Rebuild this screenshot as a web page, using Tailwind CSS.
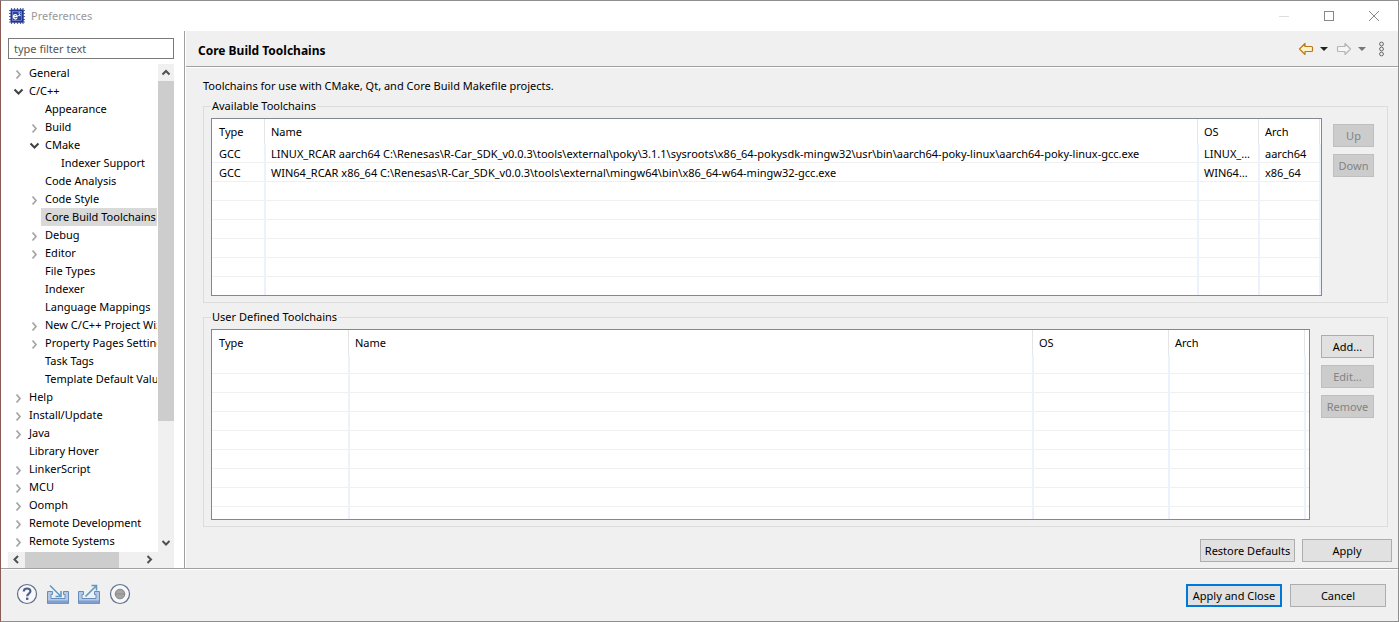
<!DOCTYPE html>
<html lang="en">
<head>
    <meta charset="UTF-8">
    <meta name="viewport" content="width=device-width, initial-scale=1.0">
    <title>Preferences</title>
    <script src="https://cdn.jsdelivr.net/npm/@tailwindcss/browser@4"></script>
</head>
<body class="font-['Noto_Sans','Open_Sans',sans-serif] text-[11px] leading-4 text-black bg-[#f0f0f0]">
    <div class="flex flex-col min-h-screen border border-[#8f8f8f] border-l-[#8a5a54]">

        <!-- Title bar -->
        <header class="flex items-center h-[30px] bg-white pl-2 pr-px">
            <svg class="w-4 h-4" viewBox="0 0 16 16">
                <path d="M2.500 0v16M5.500 0v16M8.500 0v16M11.500 0v16M14 0v16M0 2.500h16M0 5.500h16M0 8.500h16M0 11.500h16M0 14h16" stroke="#5567ae" stroke-width="1.200"/>
                <rect x="1.500" y="1.500" width="13" height="13" rx="1" fill="#24378f"/>
                <rect x="3.500" y="3.500" width="9" height="9" fill="#2d429c" stroke="#8392d4" stroke-width=".7"/>
                <path d="M4.500 8.600h3.600c0-2.600-3.600-2.600-3.600.2 0 2.600 2.600 2.600 3.500 1.400" fill="none" stroke="#fff" stroke-width="1.300"/>
                <path d="M9.300 5.200c.8-1.200 2.400-.3 1.600.8L9.400 7.600h2.300" fill="none" stroke="#fff" stroke-width=".9"/>
            </svg>
            <h1 class="ml-1.5 flex-1 text-[#999]">Preferences</h1>
            <div class="flex">
                <button class="w-[45px] h-[29px] flex items-center justify-center" aria-label="Minimize">
                    <svg class="w-3 h-3" viewBox="0 0 12 12"><path d="M1 6.500h10" stroke="#ddd"/></svg>
                </button>
                <button class="w-[45px] h-[29px] flex items-center justify-center" aria-label="Maximize">
                    <svg class="w-3 h-3" viewBox="0 0 12 12"><rect x="1.500" y="1.500" width="9" height="9" fill="none" stroke="#888"/></svg>
                </button>
                <button class="w-[46px] h-[29px] flex items-center justify-center" aria-label="Close">
                    <svg class="w-3 h-3" viewBox="0 0 12 12"><path d="M1 1l10 10M11 1L1 11" stroke="#888"/></svg>
                </button>
            </div>
        </header>

        <main class="flex flex-1">
            <!-- Category tree -->
            <aside class="w-[184px] shrink-0 flex flex-col bg-white border-r border-[#a0a0a0] pl-[7px] pr-[10px] pt-[7px]">
                <input type="text" aria-label="Filter" placeholder="type filter text" class="h-[21px] w-full border border-[#7a7a7a] px-[5px] placeholder:text-[#555]">
                <div class="mt-[5px] flex">
                    <ul id="tree" class="w-[149px] mr-px h-[488px] overflow-hidden"></ul>
                    <div class="w-4 bg-[#f0f0f0] flex flex-col items-center">
                        <svg class="w-4 h-[17px] shrink-0" viewBox="0 0 16 17"><path d="M4.500 10.500L8 7l3.500 3.500" fill="none" stroke="#505050" stroke-width="2"/></svg>
                        <div class="w-full h-[340px] bg-[#cdcdcd]"></div>
                        <svg class="mt-auto w-4 h-[17px] shrink-0" viewBox="0 0 16 17"><path d="M4.500 6L8 9.500 11.500 6" fill="none" stroke="#505050" stroke-width="2"/></svg>
                    </div>
                </div>
                <div class="flex h-4 bg-[#f0f0f0]">
                    <svg class="w-[17px] h-4" viewBox="0 0 17 16"><path d="M10 4L6.500 7.500 10 11" fill="none" stroke="#505050" stroke-width="2"/></svg>
                    <div class="w-[94px] bg-[#cdcdcd]"></div>
                    <svg class="ml-auto mr-4 w-[17px] h-4" viewBox="0 0 17 16"><path d="M6.500 4L10 7.500 6.500 11" fill="none" stroke="#505050" stroke-width="2"/></svg>
                </div>
            </aside>

            <!-- Page -->
            <section class="flex-1 min-w-0 border-l border-white">
                <div class="flex items-center h-9 border-b border-[#a0a0a0] pl-3 pr-[13px]">
                    <h2 class="flex-1 pt-1 text-[12px] font-bold">Core Build Toolchains</h2>
                    <button aria-label="Back">
                        <svg class="w-4 h-4" viewBox="0 0 16 16"><path d="M1.500 8L7 2.500v3h6.500q1 0 1 1v3q0 1-1 1H7v3z" fill="#fdf3c4" stroke="#b9791a" stroke-width="1.200" stroke-linejoin="round"/></svg>
                    </button>
                    <button class="ml-1.5" aria-label="Back history">
                        <svg class="w-2 h-4" viewBox="0 0 8 16"><path d="M0 6h8L4 10z" fill="#222"/></svg>
                    </button>
                    <button class="ml-2" aria-label="Forward">
                        <svg class="w-4 h-4" viewBox="0 0 16 16"><path d="M14.500 8L9 2.500v3H2.500q-1 0-1 1v3q0 1 1 1H9v3z" fill="#f6f6f6" stroke="#b5b5b5" stroke-width="1.200" stroke-linejoin="round"/></svg>
                    </button>
                    <button class="ml-1.5" aria-label="Forward history">
                        <svg class="w-2 h-4" viewBox="0 0 8 16"><path d="M0 6h8L4 10z" fill="#777"/></svg>
                    </button>
                    <button class="ml-3" aria-label="View menu">
                        <svg class="w-[7px] h-4" viewBox="0 0 7 16"><g fill="none" stroke="#666"><circle cx="3.500" cy="3" r="1.900"/><circle cx="3.500" cy="8" r="1.900"/><circle cx="3.500" cy="13" r="1.900"/></g></svg>
                    </button>
                </div>

                <div class="border-t border-white pt-[10px] pl-[17px] pr-[10px]">
                    <p>Toolchains for use with CMake, Qt, and Core Build Makefile projects.</p>

                    <fieldset class="mt-1 min-w-0 border border-[#dcdcdc] pl-[7px] pr-[13px] pb-1.5">
                        <legend class="px-px">Available Toolchains</legend>
                        <div class="flex items-start pt-1">
                            <div class="flex-1 min-w-0 bg-white border border-[#828790]">
                                <table class="w-full table-fixed border-separate border-spacing-0 text-left">
                                    <colgroup>
                                        <col class="w-[52px]">
                                        <col>
                                        <col class="w-[61px]">
                                        <col class="w-[61px]">
                                        <col class="w-[2px]">
                                    </colgroup>
                                    <thead>
                                        <tr class="h-[25px]">
                                            <th class="pl-[7px] font-normal">Type</th>
                                            <th class="pl-1.5 font-normal border-l border-[#e5e5e5]">Name</th>
                                            <th class="pl-1.5 font-normal border-l border-[#e5e5e5]">OS</th>
                                            <th class="pl-1.5 font-normal border-l border-[#e5e5e5]">Arch</th>
                                            <td class="border-l border-[#e5e5e5]"></td>
                                        </tr>
                                    </thead>
                                    <tbody id="available"></tbody>
                                </table>
                            </div>
                            <div class="ml-[11px] mt-1.5 w-[41px] flex flex-col gap-[7px]">
                                <button disabled class="h-[23px] bg-[#ccc] border border-[#bfbfbf] text-[#838383]">Up</button>
                                <button disabled class="h-[23px] bg-[#ccc] border border-[#bfbfbf] text-[#838383]">Down</button>
                            </div>
                        </div>
                    </fieldset>

                    <fieldset class="mt-1.5 min-w-0 border border-[#dcdcdc] pl-[7px] pr-[13px] pb-1.5">
                        <legend class="px-px">User Defined Toolchains</legend>
                        <div class="flex items-start pt-1">
                            <div class="flex-1 min-w-0 bg-white border border-[#828790]">
                                <table class="w-full table-fixed border-separate border-spacing-0 text-left">
                                    <colgroup>
                                        <col class="w-[136px]">
                                        <col>
                                        <col class="w-[136px]">
                                        <col class="w-[136px]">
                                        <col class="w-[5px]">
                                    </colgroup>
                                    <thead>
                                        <tr class="h-[25px]">
                                            <th class="pl-[7px] font-normal">Type</th>
                                            <th class="pl-1.5 font-normal border-l border-[#e5e5e5]">Name</th>
                                            <th class="pl-1.5 font-normal border-l border-[#e5e5e5]">OS</th>
                                            <th class="pl-1.5 font-normal border-l border-[#e5e5e5]">Arch</th>
                                            <td class="border-l border-[#e5e5e5]"></td>
                                        </tr>
                                    </thead>
                                    <tbody id="userDefined"></tbody>
                                </table>
                            </div>
                            <div class="ml-[11px] mt-1.5 w-[53px] flex flex-col gap-[7px]">
                                <button class="h-[23px] bg-[#e1e1e1] border border-[#adadad]">Add...</button>
                                <button disabled class="h-[23px] bg-[#ccc] border border-[#bfbfbf] text-[#838383]">Edit...</button>
                                <button disabled class="h-[23px] bg-[#ccc] border border-[#bfbfbf] text-[#838383]">Remove</button>
                            </div>
                        </div>
                    </fieldset>
                </div>

                <div class="flex justify-end gap-[7px] mt-3 pr-1.5 pb-1.5">
                    <button class="h-[23px] w-[95px] whitespace-nowrap bg-[#e1e1e1] border border-[#adadad]">Restore Defaults</button>
                    <button class="h-[23px] w-[90px] bg-[#e1e1e1] border border-[#adadad]">Apply</button>
                </div>
            </section>
        </main>

        <!-- Dialog buttons -->
        <footer class="border-t border-[#a0a0a0]">
            <div class="flex items-center h-[52px] border-t border-white pl-[15px] pr-3">
                <div class="flex flex-1 gap-[9px] pb-1">
                    <button aria-label="Help">
                        <svg class="w-[22px] h-[22px]" viewBox="0 0 22 22"><circle cx="11" cy="11" r="9.500" fill="#f8f8fa" stroke="#5f6f8f" stroke-width="1.200"/><path d="M7.800 8.600c0-4.200 6.600-4 6.600-.3 0 2.300-3.200 2.300-3.200 4.900" fill="none" stroke="#4a5f8c" stroke-width="2.200"/><rect x="10" y="14.600" width="2.400" height="2.300" fill="#4a5f8c"/></svg>
                    </button>
                    <button aria-label="Import">
                        <svg class="w-[22px] h-[22px]" viewBox="0 0 22 22"><path d="M.5 8.500h5v3H4v4h14v-4h-1.500v-3h5v12H.5z" fill="#b4c9e6" stroke="#6b8cba"/><path d="M1 17.500h20v3H1z" fill="#7f9fd0"/><path d="M3 2.500l10.500 10.500M14 8v5.500H8.500" fill="none" stroke="#5b9bc8" stroke-width="1.600"/></svg>
                    </button>
                    <button aria-label="Export">
                        <svg class="w-[22px] h-[22px]" viewBox="0 0 22 22"><path d="M.5 8.500h5v3H4v4h14v-4h-1.500v-3h5v12H.5z" fill="#b4c9e6" stroke="#6b8cba"/><path d="M1 17.500h20v3H1z" fill="#7f9fd0"/><path d="M7.500 13.500L18 3M13.500 2.500H18.500v5" fill="none" stroke="#5b9bc8" stroke-width="1.600"/></svg>
                    </button>
                    <button aria-label="Record preferences">
                        <svg class="w-[22px] h-[22px]" viewBox="0 0 22 22"><circle cx="11" cy="11" r="9.500" fill="#f8f8fa" stroke="#5f6f8f" stroke-width="1.200"/><circle cx="11" cy="11" r="4.800" fill="#a5a5a5" stroke="#858585"/><path d="M7 11h8" stroke="#8c8c8c"/></svg>
                    </button>
                </div>
                <div class="flex gap-2">
                    <button class="h-[23px] w-[96px] whitespace-nowrap bg-[#e1e1e1] border-2 border-[#0078d7]">Apply and Close</button>
                    <button class="h-[23px] w-[96px] bg-[#e1e1e1] border border-[#adadad]">Cancel</button>
                </div>
            </div>
        </footer>
    </div>

    <script>
        // [level, label, state]
        const items = [
            [0, 'General', 'closed'],
            [0, 'C/C++', 'open'],
            [1, 'Appearance'],
            [1, 'Build', 'closed'],
            [1, 'CMake', 'open'],
            [2, 'Indexer Support'],
            [1, 'Code Analysis'],
            [1, 'Code Style', 'closed'],
            [1, 'Core Build Toolchains', 'selected'],
            [1, 'Debug', 'closed'],
            [1, 'Editor', 'closed'],
            [1, 'File Types'],
            [1, 'Indexer'],
            [1, 'Language Mappings'],
            [1, 'New C/C++ Project Wizard', 'closed'],
            [1, 'Property Pages Settings', 'closed'],
            [1, 'Task Tags'],
            [1, 'Template Default Values'],
            [0, 'Help', 'closed'],
            [0, 'Install/Update', 'closed'],
            [0, 'Java', 'closed'],
            [0, 'Library Hover'],
            [0, 'LinkerScript', 'closed'],
            [0, 'MCU', 'closed'],
            [0, 'Oomph', 'closed'],
            [0, 'Remote Development', 'closed'],
            [0, 'Remote Systems', 'closed']
        ];
        const indents = ['pl-0', 'pl-4', 'pl-8'];
        const arrows = {
            closed: '<path d="M8.500 6.500l3.500 4-3.500 4" fill="none" stroke="#a6a6a6" stroke-width="1.800"/>',
            open: '<path d="M6.500 7.500l4 4 4-4" fill="none" stroke="#404040" stroke-width="2"/>'
        };

        document.getElementById('tree').innerHTML = items.map(([level, label, state]) => `
            <li class="flex h-[18px] whitespace-nowrap ${indents[level]}">
                <svg class="w-[17px] h-[18px] shrink-0" viewBox="0 0 17 18">${arrows[state] || ''}</svg>
                <span class="px-1 leading-[18px] ${state === 'selected' ? 'bg-[#d9d9d9]' : ''}">${label}</span>
            </li>`).join('');

        function fillTable(id, rows, blank, lastRow) {
            const all = rows.concat(Array(blank).fill(['', '', '', '']));
            let html = all.map(row => '<tr class="h-[19px]">' + row.map((cell, i) => i === 0
                ? `<td class="pt-px pl-[7px] border-b border-[#f0f0f0]">${cell}</td>`
                : `<td class="pt-px pl-[5px] pr-2 border-b border-b-[#f0f0f0] border-l-2 border-l-[#ecf2fb] truncate">${cell}</td>`
            ).join('') + '<td class="border-b border-b-[#f0f0f0] border-l-2 border-l-[#ecf2fb]"></td></tr>').join('');
            html += `<tr class="${lastRow}"><td></td>` + '<td class="border-l-2 border-[#ecf2fb]"></td>'.repeat(4) + '</tr>';
            document.getElementById(id).innerHTML = html;
        }

        fillTable('available', [
            ['GCC', 'LINUX_RCAR aarch64 C:\\Renesas\\R-Car_SDK_v0.0.3\\tools\\external\\poky\\3.1.1\\sysroots\\x86_64-pokysdk-mingw32\\usr\\bin\\aarch64-poky-linux\\aarch64-poky-linux-gcc.exe', 'LINUX_RCAR', 'aarch64'],
            ['GCC', 'WIN64_RCAR x86_64 C:\\Renesas\\R-Car_SDK_v0.0.3\\tools\\external\\mingw64\\bin\\x86_64-w64-mingw32-gcc.exe', 'WIN64_RCAR', 'x86_64']
        ], 5, 'h-[18px]');
        fillTable('userDefined', [], 8, 'h-[12px]');
    </script>
</body>
</html>
